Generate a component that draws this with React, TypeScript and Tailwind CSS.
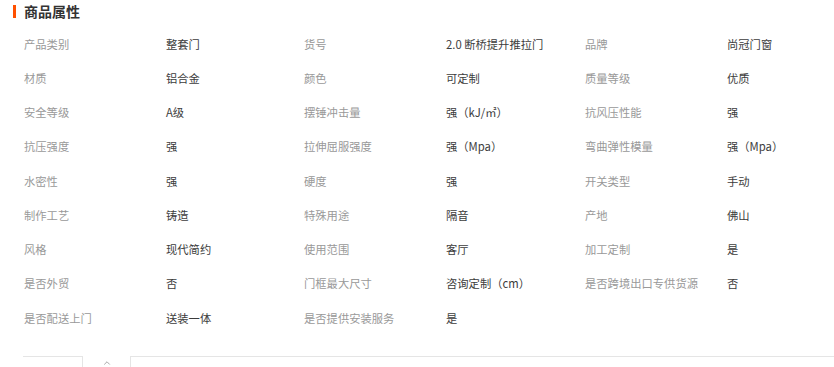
import { ChevronUp } from 'lucide-react'

const attrs: [string, string][] = [
  ['产品类别', '整套门'],
  ['货号', '2.0 断桥提升推拉门'],
  ['品牌', '尚冠门窗'],
  ['材质', '铝合金'],
  ['颜色', '可定制'],
  ['质量等级', '优质'],
  ['安全等级', 'A级'],
  ['摆锤冲击量', '强（kJ/㎡）'],
  ['抗风压性能', '强'],
  ['抗压强度', '强'],
  ['拉伸屈服强度', '强（Mpa）'],
  ['弯曲弹性模量', '强（Mpa）'],
  ['水密性', '强'],
  ['硬度', '强'],
  ['开关类型', '手动'],
  ['制作工艺', '铸造'],
  ['特殊用途', '隔音'],
  ['产地', '佛山'],
  ['风格', '现代简约'],
  ['使用范围', '客厅'],
  ['加工定制', '是'],
  ['是否外贸', '否'],
  ['门框最大尺寸', '咨询定制（cm）'],
  ['是否跨境出口专供货源', '否'],
  ['是否配送上门', '送装一体'],
  ['是否提供安装服务', '是'],
]

export default function App() {
  return (
    <div className="w-[834px] h-[367px] overflow-hidden bg-white font-['Noto_Sans_CJK_SC','Noto_Sans',sans-serif]">
      {/* Title */}
      <div className="flex items-center h-[22px] pl-[13px]">
        <div className="w-[3px] h-[13px] bg-[#ff5000]"></div>
        <h2 className="ml-[8px] text-[14px] font-bold text-[#333] leading-none">商品属性</h2>
      </div>

      {/* Attribute grid */}
      <div className="grid grid-cols-[142px_138px_142px_139px_142px_1fr] pl-[24px] pt-[5px] text-[11.3px]">
        {attrs.map(([k, v]) => (
          <div key={k} className="contents">
            <div className="h-[34.25px] flex items-center text-[#999] whitespace-nowrap">{k}</div>
            <div className="h-[34.25px] flex items-center text-[#3c3c3c] whitespace-nowrap">{v}</div>
          </div>
        ))}
      </div>

      {/* Collapse bar */}
      <div className="flex items-start mt-[21px] h-[20px]">
        <div className="ml-[23px] w-[60px] h-full border-t border-r border-[#e5e5e5]"></div>
        <div className="w-[47px] flex justify-center pt-[2px]">
          <ChevronUp className="w-[10px] h-[10px] text-[#888]" strokeWidth={1.75} />
        </div>
        <div className="flex-1 h-full border-t border-l border-[#e5e5e5]"></div>
      </div>
    </div>
  )
}
